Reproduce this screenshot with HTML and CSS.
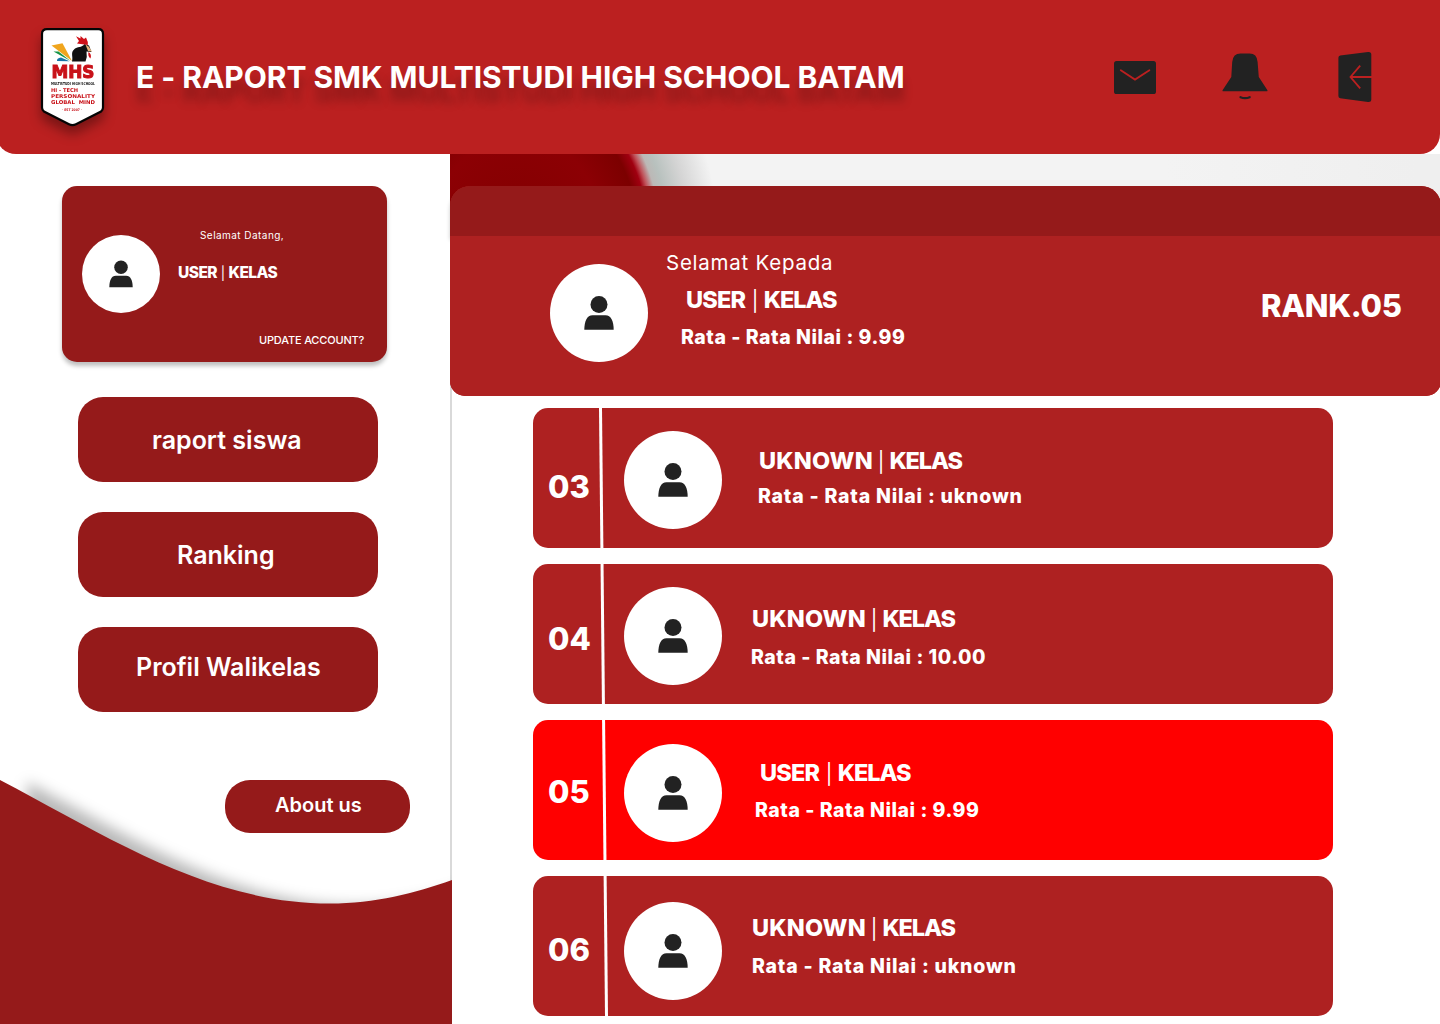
FILE: index.html
```html
<!DOCTYPE html>
<html lang="id">
<head>
<meta charset="utf-8">
<title>E - Raport SMK Multistudi High School Batam</title>
<link rel="stylesheet" href="styles.css">
</head>
<body>
<svg class="defs" width="0" height="0" aria-hidden="true">
  <symbol id="person" viewBox="0 0 98 98">
    <circle cx="49" cy="40.600" r="8.500"/>
    <path d="M34.300 65.800C34.400 57 37 51.200 42.500 51.200H55.500C61 51.200 63.600 57 63.700 65.800Z"/>
  </symbol>
</svg>
<header class="topbar">
  <svg class="logo" width="64" height="99" viewBox="0 0 64 99">
    <path d="M6 1.200H57.500Q62 1.200 62 6V79.500Q62 82 60 83.500L35 96.200Q31.500 98 28 96.200L3 83.500Q1 82 1 79.500V6Q1 1.200 6 1.200Z" fill="#fff" stroke="#050505" stroke-width="2.200"/>
    <path d="M10.500 17.500L21.500 15.300L31 33Z" fill="#f0a51e"/>
    <path d="M12.500 23.500L17.500 23.500L29.500 33Z" fill="#169447"/>
    <path d="M16 33Q15.500 30 20 29.500L28.500 33.200Z" fill="#1674a8"/>
    <path d="M31 33.500C32.500 28 29 25 33.500 21C36 18.500 41 20 43.500 16L48 17.500L50.500 24L45.500 23.500Q46.500 29 44.500 33.500Z" fill="#111"/>
    <path d="M35 8.200L39.500 10.500L39.500 8L43 11L45 9.500L46.800 14V17L36 15.500L38 13Z" fill="#cf1018"/>
    <path d="M47.500 24Q51 26 49.500 30.500Q46.500 28 47.500 24Z" fill="#cf1018"/>
    <path d="M44.500 16.500L47.500 18.500L51 23.500L47 23Z" fill="#e6b27a"/>
    <g fill="#c81219" font-family="DejaVu Sans, sans-serif" font-weight="700">
      <text x="10.500" y="50.200" font-size="17.500" textLength="43" lengthAdjust="spacingAndGlyphs" stroke="#c81219" stroke-width="1">MHS</text>
      <text x="10" y="57" font-size="4" fill="#111" textLength="44" lengthAdjust="spacingAndGlyphs">MULTISTUDI HIGH SCHOOL</text>
      <text x="10" y="64" font-size="5.300" textLength="27" lengthAdjust="spacingAndGlyphs">HI - TECH</text>
      <text x="10" y="70" font-size="5.300" textLength="44" lengthAdjust="spacingAndGlyphs">PERSONALITY</text>
      <text x="10" y="76" font-size="5.300" textLength="44" lengthAdjust="spacingAndGlyphs" xml:space="preserve">GLOBAL  MIND</text>
      <text x="21" y="83" font-size="3.500" textLength="20" lengthAdjust="spacingAndGlyphs">· EST 2007 ·</text>
    </g>
  </svg>
  <h1 class="title">E - RAPORT SMK MULTISTUDI HIGH SCHOOL BATAM</h1>
  <nav class="actions">
    <svg width="42" height="33" viewBox="0 0 42 33">
      <rect width="42" height="33" rx="2.600" fill="#222"/>
      <path d="M6.800 9.200L21 18.600L35.400 9.200" fill="none" stroke="#bb2020" stroke-width="1.800" stroke-linecap="round"/>
    </svg>
    <svg class="bell" width="46" height="48" viewBox="0 0 46 48">
      <path d="M.8 38.200Q.1 38 .7 37L9.300 24L10.200 9Q11 .6 18.500 .6H27.500Q35 .6 35.600 9L36.800 24L45.300 37Q45.900 38 45.200 38.200Z" fill="#222"/>
      <path d="M18.500 44.200Q23 46.200 27.700 44.200" fill="none" stroke="#222" stroke-width="2.200" stroke-linecap="round"/>
    </svg>
    <svg class="door" width="34" height="52" viewBox="0 0 34 52">
      <path d="M2.200 4.500L30 1Q33.300 .6 33.300 3.500V48.500Q33.300 51.300 30 51L2.200 47.200Q.4 47 .4 45V6.700Q.4 4.800 2.200 4.500Z" fill="#222"/>
      <path d="M22.200 14.600L12.500 26L22.200 37.400M12.500 26H34" fill="none" stroke="#bb2020" stroke-width="1.800"/>
    </svg>
  </nav>
</header>
<div class="page">
  <aside class="sidebar">
    <svg class="wave" width="452" height="284" viewBox="0 740 452 284">
      <defs>
        <path id="hill" d="M0 780C110 838 210 903.500 330 903.500C375 903.500 415 893 452 880V1024H0Z"/>
        <filter id="soft" x="-20%" y="-20%" width="140%" height="140%"><feGaussianBlur stdDeviation="7"/></filter>
      </defs>
      <use href="#hill" x="27" y="2" fill="#000" fill-opacity=".28" filter="url(#soft)"/>
      <use href="#hill" fill="#951a1a"/>
    </svg>
    <section class="account">
      <svg class="avatar small"><use href="#person"/></svg>
      <div class="account-text">
        <p class="welcome">Selamat Datang,</p>
        <p class="account-name">USER <i>|</i> KELAS</p>
        <a class="update">UPDATE ACCOUNT?</a>
      </div>
    </section>
    <nav class="menu">
      <a class="button b1">raport siswa</a>
      <a class="button b2">Ranking</a>
      <a class="button b3">Profil Walikelas</a>
    </nav>
    <a class="about">About us</a>
  </aside>
  <main class="content">
    <div class="photo"></div>
    <section class="hero">
      <div class="hero-band"></div>
      <div class="hero-body">
        <svg class="avatar"><use href="#person"/></svg>
        <div class="hero-text">
          <p class="greet">Selamat Kepada</p>
          <p class="name">USER <i>|</i> <span>KELAS</span></p>
          <p class="score">Rata <b>-</b> Rata Nilai : 9.99</p>
        </div>
        <p class="rank">RANK.05</p>
      </div>
    </section>
    <section class="list">
      <article class="row r3">
        <p class="num">03</p>
        <svg class="avatar"><use href="#person"/></svg>
        <div class="info"><p class="name unk">UKNOWN <i>|</i> <span>KELAS</span></p><p class="score sunk">Rata <b>-</b> Rata Nilai : uknown</p></div>
      </article>
      <article class="row r4">
        <p class="num">04</p>
        <svg class="avatar"><use href="#person"/></svg>
        <div class="info"><p class="name unk">UKNOWN <i>|</i> <span>KELAS</span></p><p class="score">Rata <b>-</b> Rata Nilai : 10.00</p></div>
      </article>
      <article class="row r5 current">
        <p class="num">05</p>
        <svg class="avatar"><use href="#person"/></svg>
        <div class="info"><p class="name">USER <i>|</i> <span>KELAS</span></p><p class="score">Rata <b>-</b> Rata Nilai : 9.99</p></div>
      </article>
      <article class="row r6">
        <p class="num">06</p>
        <svg class="avatar"><use href="#person"/></svg>
        <div class="info"><p class="name unk">UKNOWN <i>|</i> <span>KELAS</span></p><p class="score sunk">Rata <b>-</b> Rata Nilai : uknown</p></div>
      </article>
      <svg class="rule" width="12" height="608" viewBox="0 0 12 608"><path d="M2.500 0L8.500 608" stroke="#fff" stroke-width="3"/></svg>
    </section>
  </main>
</div>
</body>
</html>
```
FILE: styles.css
```css
* { box-sizing: border-box; }
body {
  margin: 0;
  width: 1440px;
  height: 1024px;
  overflow: hidden;
  background: #fff;
  color: #fff;
  font-family: Inter, "Liberation Sans", sans-serif;
}
p, h1 { margin: 0; white-space: nowrap; }
i { font-style: normal; font-weight: 400; font-size: .85em; }
b { font-weight: inherit; }
svg { display: block; flex: none; }
.defs { position: absolute; }

.topbar {
  display: flex;
  align-items: flex-start;
  height: 154px;
  margin-left: -4px;
  padding-left: 45px;
  background: #bb2020;
  border-radius: 0 0 20px 20px;
}
.logo { margin-top: 28px; overflow: visible; filter: drop-shadow(0 8px 6px rgba(0, 0, 0, .35)); }
.title {
  margin: 57px 0 0 31px;
  width: 978px;
  font-size: 30px;
  line-height: 40px;
  font-weight: 700;
  letter-spacing: -.04px;
  text-shadow: 0 14px 10px rgba(0, 0, 0, .25);
}
.actions { display: flex; align-items: flex-start; padding-top: 61px; }
.bell { margin: -8px 0 0 66px; }
.door { margin: -10px 0 0 70px; }

.page { display: flex; height: 870px; }
.sidebar {
  position: relative;
  width: 452px;
  height: 870px;
  padding-top: 32px;
  border-right: 2px solid #d9d9d9;
}
.wave { position: absolute; left: 0; bottom: 0; }
.account {
  display: flex;
  width: 325px;
  height: 176px;
  margin-left: 62px;
  padding-left: 20px;
  background: #951a1a;
  border-radius: 15px;
  box-shadow: 0 4px 4px rgba(0, 0, 0, .25);
}
.avatar { width: 98px; height: 98px; border-radius: 50%; background: #fff; fill: #222; }
.small { width: 78px; height: 78px; margin-top: 49px; }
.account-text { display: flex; flex-direction: column; padding-left: 18px; }
.welcome { margin: 39px 0 0 22px; font-size: 10px; line-height: 20px; font-weight: 400; letter-spacing: .45px; }
.account-name { margin-top: 18px; font-size: 15.500px; line-height: 20px; font-weight: 800; letter-spacing: -.55px; }
.account-name i { margin: 0 1px; }
.update { margin: 47px 0 0 81px; font-size: 11px; line-height: 20px; font-weight: 500; letter-spacing: -.17px; white-space: nowrap; }
.menu { display: flex; flex-direction: column; gap: 30px; width: 300px; margin: 35px 0 0 78px; }
.button {
  height: 85px;
  background: #951a1a;
  border-radius: 25px;
  font-size: 25px;
  line-height: 87px;
  font-weight: 600;
}
.b1 { padding-left: 74px; }
.b2 { padding-left: 99px; }
.b3 { padding-left: 58px; line-height: 80px; }
.about {
  display: block;
  position: relative;
  width: 185px;
  height: 53px;
  margin: 68px 0 0 225px;
  padding-left: 50px;
  background: #951a1a;
  border-radius: 25px;
  font-size: 20px;
  line-height: 50px;
  font-weight: 600;
}

.content { width: 990px; margin-left: -2px; position: relative; }
.photo {
  height: 82px;
  background: radial-gradient(ellipse 1000px 1180px at 68px 82px, #820000 0, #8c0004 8.5%, #7c0000 12%, #a00010 13%, #c05058 13.500%, #bcb8b6 14.200%, #b8c1be 15%, #d4d4d4 17%, #f3f3f3 20%, #f3f3f3 65%, #efefef 90%);
}
.hero { width: 991px; height: 210px; margin-top: -50px; border-radius: 20px 20px 15px 15px; background: #ae2121; }
.hero-band { height: 50px; background: #951a1a; border-radius: 20px 20px 0 0; box-shadow: 0 4px 4px rgba(0, 0, 0, .2); }
.hero-body { position: relative; display: flex; height: 160px; padding: 28px 0 0 100px; background: #ae2121; border-radius: 0 0 15px 15px; }
.hero-text { width: 613px; padding-left: 18px; margin-top: -17px; }
.greet { font-size: 20.500px; line-height: 31px; font-weight: 400; letter-spacing: .75px; }
.name { font-size: 23.500px; line-height: 30px; font-weight: 800; letter-spacing: -.8px; }
.name i { margin: 0 2px; }
.name span { letter-spacing: -1.100px; }
.name.unk { letter-spacing: .2px; }
.name.unk i { margin: 0 -.5px; }
.score { font-size: 19.500px; line-height: 30px; font-weight: 800; letter-spacing: .53px; }
.sunk { letter-spacing: .78px; }
.hero .name { margin: 6.500px 0 0 20px; }
.hero .score { margin: 6.500px 0 0 15px; }
.rank { font-size: 31px; line-height: 40px; font-weight: 800; letter-spacing: -.3px; margin-top: 22px; }

.list { position: relative; display: flex; flex-direction: column; gap: 16px; width: 800px; margin: 12px 0 0 83px; }
.row { display: flex; height: 140px; background: #ae2121; border-radius: 15px; }
.current { background: #f00; }
.num { width: 91px; padding-left: 15px; font-size: 31px; line-height: 40px; font-weight: 800; }
.rule { position: absolute; left: 65px; top: 0; }
.r3 .num { padding-top: 59px; }
.r3 .avatar { margin-top: 23px; }
.r3 .info { padding: 37.500px 0 0 37px; }
.r3 .score { margin: 4.500px 0 0 -1px; }
.r4 .num { padding-top: 55px; }
.r4 .avatar { margin-top: 23px; }
.r4 .info { padding: 39.500px 0 0 30px; }
.r4 .score { margin: 7.500px 0 0 -1px; }
.r5 .num { padding-top: 52px; }
.r5 .avatar { margin-top: 24px; }
.r5 .info { padding: 37.500px 0 0 38px; }
.r5 .score { margin: 6.500px 0 0 -5px; }
.r6 .num { padding-top: 54px; }
.r6 .avatar { margin-top: 26px; }
.r6 .info { padding: 36.500px 0 0 30px; }
.r6 .score { margin: 7.500px 0 0 0; }
```
